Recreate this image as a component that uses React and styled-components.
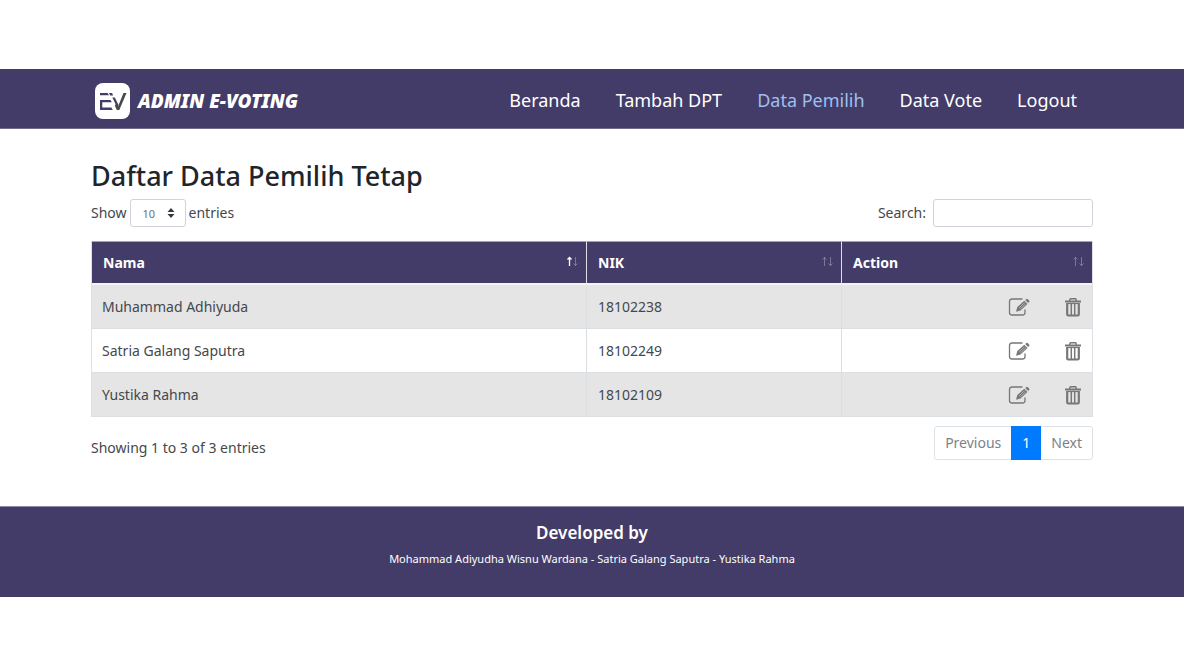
import React from "react";
import styled, { createGlobalStyle, ThemeProvider } from "styled-components";

const theme = {
  primary: "#443c68",
  text: "#212529",
  line: "#dee2e6",
  accent: "#007bff",
};

const GlobalStyle = createGlobalStyle`
  *, *::before, *::after { box-sizing: border-box; }
  body {
    margin: 0;
    background: #fff;
    color: #44484c;
    font-family: "Noto Sans", "Open Sans", sans-serif;
    font-size: 14px;
    line-height: 20px;
  }
`;

const Page = styled.div`
  padding: 69px 0;
`;

const Container = styled.div`
  width: calc(100% - 32px);
  max-width: 1002px;
  margin: 0 auto;
`;

const Navbar = styled.header`
  background: ${({ theme }) => theme.primary};
  border-bottom: 1px solid #6f698f;
`;

const NavInner = styled(Container)`
  display: flex;
  align-items: center;
  justify-content: space-between;
  min-height: 59px;
  padding: 0 16px 0 4px;
`;

const Brand = styled.a`
  display: flex;
  align-items: center;
  gap: 8px;
  color: #fff;
  text-decoration: none;
  font-size: 19px;
  font-weight: 900;
  font-style: italic;
  padding-top: 4px;
`;

const NavLinks = styled.nav`
  display: flex;
  gap: 35px;
`;

const NavLink = styled.a`
  color: ${({ $active }) => ($active ? "#9fbfee" : "#fff")};
  text-decoration: none;
  font-size: 18px;
  line-height: 28px;
  padding-top: 2px;
`;

const Main = styled(Container).attrs({ as: "main" })`
  padding: 30px 0 46px;
`;

const Title = styled.h1`
  margin: 0 0 6px;
  color: ${({ theme }) => theme.text};
  font-size: 27px;
  font-weight: 500;
  line-height: 34px;
`;

const Toolbar = styled.div`
  display: flex;
  align-items: center;
  justify-content: space-between;
  margin-bottom: 14px;
`;

const Field = styled.label`
  display: flex;
  align-items: center;
  gap: ${({ $gap }) => $gap}px;
`;

const SelectWrap = styled.span`
  position: relative;
  display: flex;
`;

const LengthSelect = styled.select`
  appearance: none;
  width: 56px;
  height: 28px;
  padding: 2px 0 0 12px;
  border: 1px solid #ced4da;
  border-radius: 3px;
  background: #fff;
  color: #6c7278;
  font: inherit;
  font-size: 11px;
`;

const SelectArrows = styled.svg`
  position: absolute;
  right: 11px;
  top: 9px;
  pointer-events: none;
`;

const SearchInput = styled.input`
  width: 160px;
  height: 28px;
  padding: 4px 8px;
  border: 1px solid #ced4da;
  border-radius: 3px;
  background: #fff;
  font: inherit;
`;

const Table = styled.table`
  width: 100%;
  table-layout: fixed;
  border-spacing: 0;
  border-left: 1px solid ${({ theme }) => theme.line};
  border-right: 1px solid ${({ theme }) => theme.line};
`;

const HeadCell = styled.th`
  width: ${({ $width }) => $width};
  height: 44px;
  padding: 1px 8px 0 11px;
  background: ${({ theme }) => theme.primary};
  border-top: 1px solid #a5a1b8;
  border-bottom: 2px solid #f4f4f8;
  color: #fff;
  font-weight: 700;
  text-align: left;

  & + & {
    border-left: 1px solid ${({ theme }) => theme.line};
  }
`;

const HeadContent = styled.div`
  display: flex;
  align-items: center;
  justify-content: space-between;
`;

const Row = styled.tr`
  background: #fff;

  &:nth-child(odd) {
    background: #e5e5e5;
  }
`;

const Cell = styled.td`
  height: 44px;
  padding: 0 10px;
  border-bottom: 1px solid #dcdfe2;

  & + & {
    padding-left: 11px;
    border-left: 1px solid #dcdfe2;
  }
`;

const Actions = styled.div`
  display: flex;
  justify-content: flex-end;
  align-items: center;
  gap: 34px;
`;

const IconButton = styled.button`
  display: flex;
  padding: 0;
  border: 0;
  background: none;
  color: #777;
  cursor: pointer;
`;

const TableFooter = styled.div`
  display: flex;
  align-items: center;
  justify-content: space-between;
  padding-top: 9px;
`;

const Info = styled.p`
  margin: 0;
  padding-top: 10px;
`;

const Pagination = styled.nav`
  display: flex;
  border: 1px solid ${({ theme }) => theme.line};
  border-radius: 3px;
`;

const PageButton = styled.button`
  min-width: 30px;
  height: 34px;
  margin: -1px 0;
  padding: 0 10px;
  border: 0;
  background: ${({ $current, theme }) => ($current ? theme.accent : "transparent")};
  color: ${({ $current }) => ($current ? "#fff" : "#7b838a")};
  font: inherit;
`;

const Footer = styled.footer`
  min-height: 91px;
  padding: 13px 16px;
  background: ${({ theme }) => theme.primary};
  border-top: 1px solid #8e89a6;
  color: #fff;
  text-align: center;
`;

const FooterTitle = styled.h2`
  margin: 0 0 4px;
  font-size: 17px;
  font-weight: 600;
  line-height: 26px;
`;

const Credits = styled.p`
  margin: 0;
  font-size: 11px;
  line-height: 18px;
`;

const Logo = () => (
  <svg width="35" height="36" viewBox="0 0 35 36" aria-hidden="true">
    <rect width="35" height="36" rx="8" fill="#fff" />
    <path d="M5 10h7.500l1.500 2.300H5zM5 17h10.500l1.300 2.300H7.300v5.200h9l1.500 2.500H5z" fill="#443c68" />
    <path d="M14 10h3l1.200 2.500h-3zM17.300 14.500h2.500l3.700 7.500-1 3z" fill="#443c68" />
    <path d="M28.500 10h3L24.300 27h-2.500l-2-4.500 1.200-1.500 2 2.500z" fill="#48494b" />
  </svg>
);

const SortIcon = ({ ascending }) => (
  <svg width="12" height="14" viewBox="0 0 12 14" fill="none" stroke="#fff" aria-hidden="true">
    <path d="M3.500 10V1.500M1.500 3.500l2-2 2 2" strokeOpacity={ascending ? 1 : 0.3} strokeWidth={ascending ? 1.3 : 1} />
    <path d="M9.500 1v8.500M7.500 7.500l2 2 2-2" strokeOpacity="0.3" />
  </svg>
);

const EditIcon = () => (
  <svg width="22" height="20" viewBox="0 0 22 20" fill="none" stroke="currentColor" aria-hidden="true">
    <path d="M14 2H4Q1.500 2 1.500 4.500v11Q1.500 18 4 18h10.500q2.500 0 2.500-2.500V13" strokeWidth="1.300" strokeLinecap="round" />
    <path d="M8 14.800l1.300-4.800 7-6.200 3.200 3.300-7 6.300z" fill="currentColor" stroke="none" />
    <path d="M17.200 3l1.200-1.100q.6-.5 1.200.1l1.700 1.700q.5.600 0 1.100l-1.200 1.200z" fill="currentColor" stroke="none" />
    <path d="M11 10.800l5.500-5M12.200 12l5.500-5" stroke="#c8c8c8" strokeWidth=".7" />
  </svg>
);

const TrashIcon = () => (
  <svg width="18" height="20" viewBox="0 0 18 20" fill="none" stroke="currentColor" aria-hidden="true">
    <path d="M5.500 4L6.200 1.700h5.600L12.500 4" strokeWidth="1.400" strokeLinejoin="round" />
    <path d="M1 4.500h16" strokeWidth="2" />
    <path d="M3.200 6v11.500q0 1 1 1h9.600q1 0 1-1V6" strokeWidth="2.200" />
    <path d="M7.300 6v12M10.700 6v12" strokeWidth="1.500" />
    <path d="M3 6.500h12" strokeWidth="1.200" />
  </svg>
);

const links = ["Beranda", "Tambah DPT", "Data Pemilih", "Data Vote", "Logout"];

const columns = [
  { label: "Nama", width: "49.4%", ascending: true },
  { label: "NIK", width: "25.5%" },
  { label: "Action", width: "25.1%" },
];

const voters = [
  { name: "Muhammad Adhiyuda", nik: "18102238" },
  { name: "Satria Galang Saputra", nik: "18102249" },
  { name: "Yustika Rahma", nik: "18102109" },
];

export default function App() {
  return (
    <ThemeProvider theme={theme}>
      <GlobalStyle />
      <Page>
        <Navbar>
          <NavInner>
            <Brand href="#">
              <Logo />
              ADMIN E-VOTING
            </Brand>
            <NavLinks>
              {links.map((label) => (
                <NavLink key={label} href="#" $active={label === "Data Pemilih"}>
                  {label}
                </NavLink>
              ))}
            </NavLinks>
          </NavInner>
        </Navbar>

        <Main>
          <Title>Daftar Data Pemilih Tetap</Title>
          <Toolbar>
            <Field $gap={3}>
              Show
              <SelectWrap>
                <LengthSelect defaultValue="10">
                  <option>10</option>
                  <option>25</option>
                  <option>50</option>
                </LengthSelect>
                <SelectArrows width="8" height="10" viewBox="0 0 8 10" fill="#343a40" aria-hidden="true">
                  <path d="M4 0l3.500 4h-7zM4 10L.5 6h7z" />
                </SelectArrows>
              </SelectWrap>
              entries
            </Field>
            <Field $gap={7}>
              Search:
              <SearchInput type="search" />
            </Field>
          </Toolbar>

          <Table>
            <thead>
              <tr>
                {columns.map((column) => (
                  <HeadCell key={column.label} $width={column.width}>
                    <HeadContent>
                      {column.label}
                      <SortIcon ascending={column.ascending} />
                    </HeadContent>
                  </HeadCell>
                ))}
              </tr>
            </thead>
            <tbody>
              {voters.map((voter) => (
                <Row key={voter.nik}>
                  <Cell>{voter.name}</Cell>
                  <Cell>{voter.nik}</Cell>
                  <Cell>
                    <Actions>
                      <IconButton type="button" aria-label={`Edit ${voter.name}`}>
                        <EditIcon />
                      </IconButton>
                      <IconButton type="button" aria-label={`Hapus ${voter.name}`}>
                        <TrashIcon />
                      </IconButton>
                    </Actions>
                  </Cell>
                </Row>
              ))}
            </tbody>
          </Table>

          <TableFooter>
            <Info>Showing 1 to 3 of 3 entries</Info>
            <Pagination aria-label="Pagination">
              <PageButton type="button">Previous</PageButton>
              <PageButton type="button" $current>1</PageButton>
              <PageButton type="button">Next</PageButton>
            </Pagination>
          </TableFooter>
        </Main>

        <Footer>
          <FooterTitle>Developed by</FooterTitle>
          <Credits>Mohammad Adiyudha Wisnu Wardana - Satria Galang Saputra - Yustika Rahma</Credits>
        </Footer>
      </Page>
    </ThemeProvider>
  );
}
